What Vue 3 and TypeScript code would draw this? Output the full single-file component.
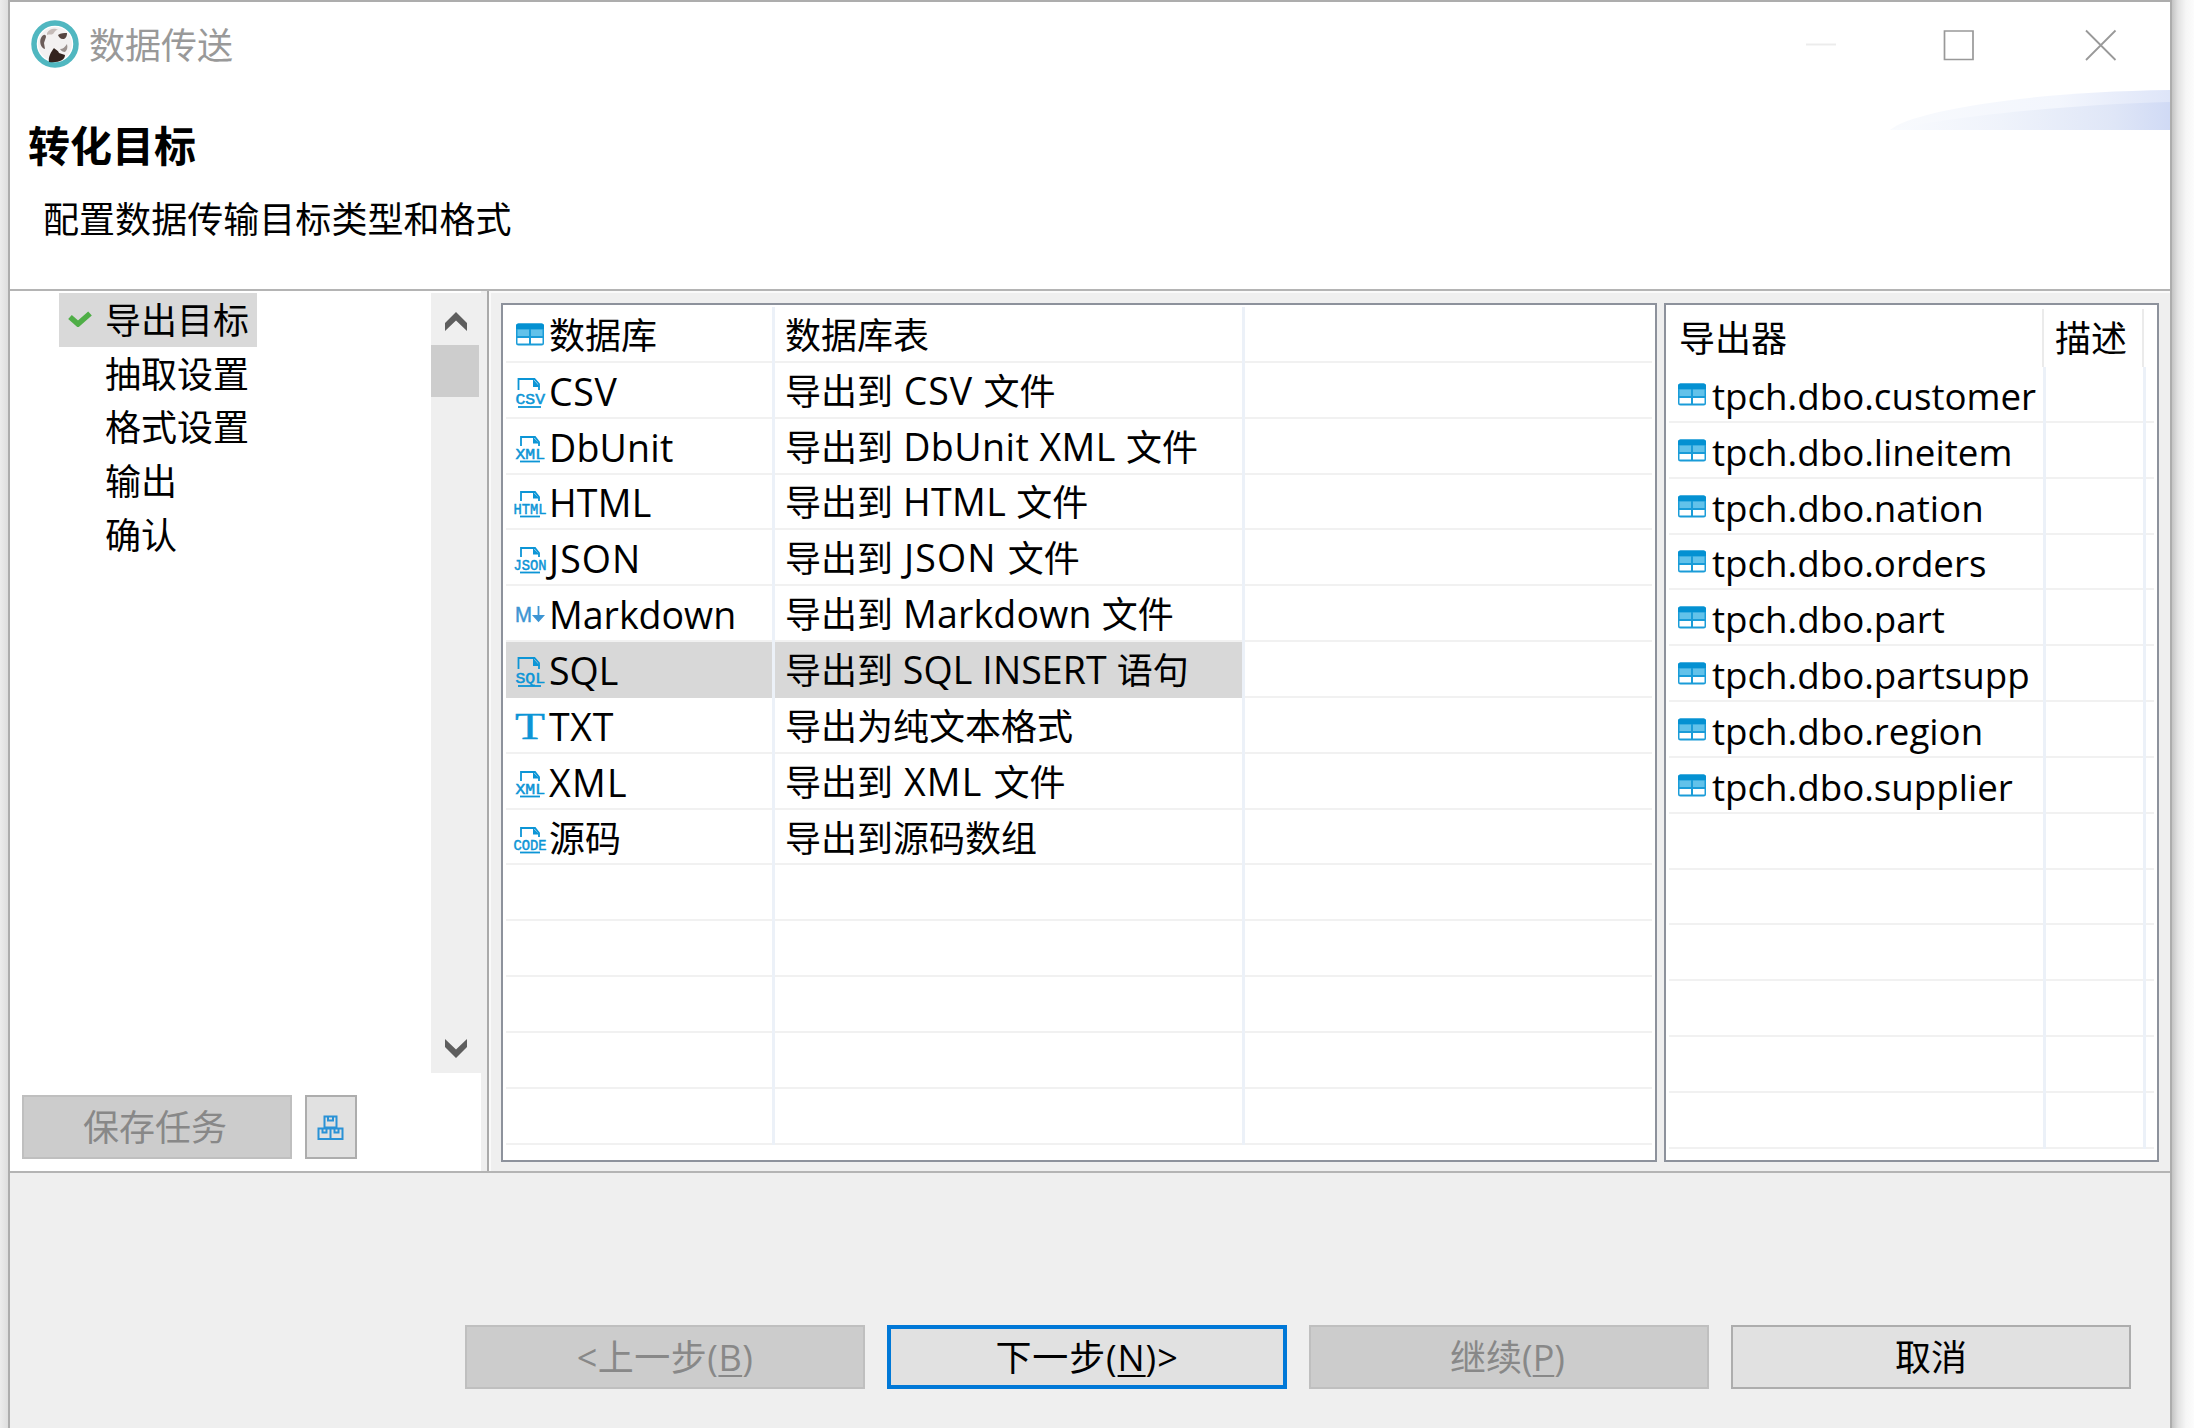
<script setup lang="ts">
interface Format {
  icon: string
  name: string
  desc: [string, string?, string?]
  cjk?: boolean
  nameGap?: number
  descGap?: number
}

const steps: string[] = ['导出目标', '抽取设置', '格式设置', '输出', '确认']

const formats: Format[] = [
  { icon: 'table', name: '数据库', desc: ['数据库表'], cjk: true },
  { icon: 'CSV', name: 'CSV', desc: ['导出到', ' CSV ', '文件'], nameGap: 0.7, descGap: 0.9 },
  { icon: 'XML', name: 'DbUnit', desc: ['导出到', ' DbUnit XML ', '文件'], nameGap: 0.2, descGap: 0.45 },
  { icon: 'HTML', name: 'HTML', desc: ['导出到', ' HTML ', '文件'], nameGap: 0.2, descGap: 0.35 },
  { icon: 'JSON', name: 'JSON', desc: ['导出到', ' JSON ', '文件'], nameGap: 1.1, descGap: 1.2 },
  { icon: 'md', name: 'Markdown', desc: ['导出到', ' Markdown ', '文件'], nameGap: 0, descGap: 0.2 },
  { icon: 'SQL', name: 'SQL', desc: ['导出到', ' SQL INSERT ', '语句'], nameGap: 0, descGap: 0.1 },
  { icon: 'txt', name: 'TXT', desc: ['导出为纯文本格式'], nameGap: 0.7 },
  { icon: 'XML', name: 'XML', desc: ['导出到', ' XML ', '文件'], nameGap: 1.3, descGap: 1.2 },
  { icon: 'CODE', name: '源码', desc: ['导出到源码数组'], cjk: true },
]

const tables: string[] = ['customer', 'lineitem', 'nation', 'orders', 'part', 'partsupp', 'region', 'supplier']
const selected = 'SQL'
const big = (name: string): boolean => name === 'CSV' || name === 'SQL'
const gap = (v?: number) => ({ letterSpacing: `${v ?? 0}px` })
</script>

<template>
  <div class="desktop">
    <div class="window">
      <header class="head">
        <div class="titlebar">
          <svg class="logo" viewBox="0 0 48 50">
            <circle cx="24" cy="25" r="21" fill="#fff" stroke="#50b7c0" stroke-width="5.500" />
            <circle cx="24" cy="25" r="17" fill="#f3f1f1" />
            <path d="M10 19c2-4 5-4 5-1l-2 6 1 6c-4-1-6-7-4-11z" fill="#6b5c59" />
            <path d="M16 14c3-5 8-5 11-3-3 0-3 2-5 4-2 1-4 0-6 1z" fill="#c5bbb8" />
            <path d="M27 16c3-2 6-2 9-2 0 4-2 6-4 6-3 0-4-2-5-4z" fill="#55443f" />
            <path d="M29 30c3 0 5-2 7-5 1 4 0 6-2 8-2 0-4-1-5-3z" fill="#9b918e" />
            <path d="M18 43c-1-5 2-10 5-14 2 2 4 2 5 5l6 2c0 5-6 8-16 7z" fill="#33231e" />
          </svg>
          <span class="caption">数据传送</span>
          <svg class="controls" viewBox="0 0 320 32">
            <path d="M1 15.500h30" stroke="#ececec" stroke-width="2" />
            <path d="M139.500 2h28.500v28.500h-28.500z" fill="none" stroke="#999" stroke-width="1.700" />
            <path d="M281 1.500l29.500 29.500M310.500 1.500L281 31" stroke="#999" stroke-width="1.800" />
          </svg>
        </div>
        <svg class="swoosh" viewBox="0 0 280 40">
          <defs>
            <linearGradient id="sw1"><stop offset="0" stop-color="#f8fafd" /><stop offset=".6" stop-color="#f3f6fd" /><stop offset="1" stop-color="#dee5f8" /></linearGradient>
            <linearGradient id="sw2"><stop offset="0" stop-color="#f9fbfe" /><stop offset=".4" stop-color="#eff3fb" /><stop offset=".8" stop-color="#dfe6f7" /><stop offset="1" stop-color="#d0daf5" /></linearGradient>
          </defs>
          <path d="M0 40C20 22 130 2 280 0v40z" fill="url(#sw1)" />
          <path d="M0 40C60 27 170 15 280 12v28z" fill="url(#sw2)" />
        </svg>
        <h1>转化目标</h1>
        <p>配置数据传输目标类型和格式</p>
      </header>

      <main class="body">
        <aside class="side">
          <div class="side-main">
            <ul class="steps">
              <li v-for="(step, i) in steps" :key="step" :class="{ on: i === 0 }">
                <svg v-if="i === 0" class="check" viewBox="0 0 24 16"><path d="M2 6l8 7L22 2.500" fill="none" stroke="#4fae47" stroke-width="5.500" /></svg>
                <span>{{ step }}</span>
              </li>
            </ul>
            <div class="scroll">
              <svg class="arrow" viewBox="0 0 24 20"><path d="M1 11L12 0l11 11v8L12 8.500 1 19z" fill="#5e5e5e" /></svg>
              <div class="thumb"></div>
              <svg class="arrow down" viewBox="0 0 24 20"><path d="M1 9l11 11L23 9V1L12 11.500 1 1z" fill="#5e5e5e" /></svg>
            </div>
          </div>
          <div class="task">
            <button class="btn off save">保存任务</button>
            <button class="btn small">
              <svg viewBox="0 0 27 26" width="27" height="26"><path d="M7.500 1.500h12v11h-12zM11 1.500v4h5v-4M1.500 13.500h24v10.500h-24zM13.500 13.500v10.500M5.500 13.500v4h4v-4M17.500 13.500v4h4v-4" fill="none" stroke="#2a92d6" stroke-width="2" /></svg>
            </button>
          </div>
        </aside>

        <section class="panes">
          <div class="grid formats">
            <div v-for="f in formats" :key="f.name" class="row" :class="{ sel: f.name === selected }">
              <div class="cell c1">
                <svg class="ico" viewBox="0 0 34 34">
                  <g v-if="f.icon === 'table'">
                    <path d="M5.500 4.500h23Q31 4.500 31 7v17q0 2.500-2.500 2.500h-23Q3 26.500 3 24V7q0-2.500 2.500-2.500z" fill="#1a9cd8" />
                    <path d="M5.500 4.500h23Q31 4.500 31 7v3H3V7q0-2.500 2.500-2.500z" fill="#0491d2" />
                    <path d="M4.500 10.500h11.500v6.500H4.500zM18 10.500h11.500v6.500H18z" fill="#62c2ea" />
                    <path d="M4.500 19h11.500v5.500H4.500zM18 19h11.500v5.500H18z" fill="#fff" />
                  </g>
                  <g v-else-if="f.icon === 'md'">
                    <text x="2" y="23.500" class="mk" textLength="17" lengthAdjust="spacingAndGlyphs">M</text>
                    <path d="M25.500 8v14M21 18l4.500 5 4.500-5z" fill="#3d95d3" stroke="#3d95d3" stroke-width="1.800" />
                  </g>
                  <text v-else-if="f.icon === 'txt'" x="2" y="28.500" class="tt" textLength="30" lengthAdjust="spacingAndGlyphs">T</text>
                  <g v-else>
                    <path :d="big(f.icon) ? 'M5.500 15V4h16l4.500 5v6' : 'M8 15V6h14l4 5v4'" fill="none" stroke="#0c95d6" stroke-width="1.800" />
                    <path :d="big(f.icon) ? 'M20 4l7 8h-7z' : 'M20 6l6.500 6.500h-6.500z'" fill="#0c95d6" />
                    <text :x="f.icon.length > 3 ? 0.5 : 2.500" :y="big(f.icon) ? 28.5 : 27.5" class="tag" :textLength="f.icon.length > 3 ? 33 : 29.5" lengthAdjust="spacingAndGlyphs">{{ f.icon }}</text>
                    <path :d="big(f.icon) ? 'M5 32h23' : 'M7 30.500h20'" stroke="#0c95d6" stroke-width="1.800" />
                  </g>
                </svg>
                <span :class="{ latin: !f.cjk }" :style="gap(f.nameGap)">{{ f.name }}</span>
              </div>
              <div class="cell c2"><span>{{ f.desc[0] }}<span v-if="f.desc[1]" class="latin" :style="gap(f.descGap)">{{ f.desc[1] }}</span>{{ f.desc[2] ?? '' }}</span></div>
              <div class="cell c3"></div>
            </div>
            <div v-for="n in 5" :key="n" class="row">
              <div class="cell c1"></div><div class="cell c2"></div><div class="cell c3"></div>
            </div>
          </div>

          <div class="grid exporters">
            <div class="thead"><div class="h1">导出器</div><div class="h2">描述</div></div>
            <div v-for="t in tables" :key="t" class="row">
              <div class="cell e1">
                <svg class="ico" viewBox="0 0 34 34">
                  <path d="M5.500 4.500h23Q31 4.500 31 7v17q0 2.500-2.500 2.500h-23Q3 26.500 3 24V7q0-2.500 2.500-2.500z" fill="#1a9cd8" />
                  <path d="M5.500 4.500h23Q31 4.500 31 7v3H3V7q0-2.500 2.500-2.500z" fill="#0491d2" />
                  <path d="M4.500 10.500h11.500v6.500H4.500zM18 10.500h11.500v6.500H18z" fill="#62c2ea" />
                  <path d="M4.500 19h11.500v5.500H4.500zM18 19h11.500v5.500H18z" fill="#fff" />
                </svg>
                <span class="tname">tpch.dbo.{{ t }}</span>
              </div>
              <div class="cell e2"></div><div class="cell e3"></div>
            </div>
            <div v-for="n in 6" :key="n" class="row">
              <div class="cell e1"></div><div class="cell e2"></div><div class="cell e3"></div>
            </div>
          </div>
        </section>
      </main>

      <footer class="foot">
        <button class="btn off back">&lt;上一步(<u>B</u>)</button>
        <button class="btn primary">下一步(<u>N</u>)&gt;</button>
        <button class="btn off next">继续(<u>P</u>)</button>
        <button class="btn">取消</button>
      </footer>
    </div>
  </div>
</template>

<style>
body { margin: 0; overflow: hidden; background: #fff; }
</style>

<style scoped>
* { box-sizing: border-box; }
.desktop {
  width: 2194px; height: 1428px; overflow: hidden; padding-left: 8px;
  background: linear-gradient(90deg, #ececec, #dedede 8px, #dedede 2171px, #c4c4c4 2172px, #e2e2e2 2178px, #f6f6f6 2186px, #fcfcfc 2194px);
  font-family: "Open Sans", "Noto Sans CJK SC", sans-serif; font-size: 36px; line-height: 50px; color: #000;
}
.window {
  width: 2164px; height: 1440px; display: flex; flex-direction: column;
  border: 2px solid #adadad; background: #efefef;
}
.head { position: relative; height: 289px; background: #fff; border-bottom: 2px solid #b4b4b4; flex: none; }
.titlebar { display: flex; height: 86px; padding-left: 21px; align-items: center; }
.logo { width: 48px; height: 50px; margin-top: -2px; flex: none; }
.caption { margin: 2px 0 0 10px; color: #999; flex: 1; }
.controls { width: 320px; height: 32px; margin-right: 45px; }
.swoosh { position: absolute; right: 0; top: 88px; width: 280px; height: 40px; }
h1 { margin: 30px 0 0 18px; font-size: 42px; line-height: 56px; font-weight: 700; }
p { margin: 21px 0 0 33px; letter-spacing: 0.050px; }
.body { display: flex; height: 882px; flex: none; border-bottom: 2px solid #b4b4b4; }
.side { width: 479px; background: #fff; border-right: 2px solid #aaa; padding-top: 2px; flex: none; box-shadow: inset -6px 0 0 #efefef; }
.side-main { display: flex; height: 780px; justify-content: space-between; }
.steps { list-style: none; margin: 0; padding: 0 0 0 49px; }
.steps li { height: 53.700px; display: flex; align-items: center; width: 198px; padding: 2px 0 0 46px; }
.steps li.on { background: #d9d9d9; padding-left: 9px; }
.check { width: 24px; height: 16px; margin: -3px 13px 0 0; }
.scroll { width: 56px; background: #efefef; display: flex; flex-direction: column; }
.arrow { width: 24px; height: 20px; margin: 19px 0 13px 13px; }
.arrow.down { margin: auto 0 15px 13px; }
.thumb { width: 48px; height: 52px; background: #cdcdcd; }
.task { display: flex; gap: 13px; padding: 22px 0 0 12px; }
.btn {
  height: 64px; width: 400px; padding: 2px 0 0; border: 2px solid #adadad; background: #e1e1e1;
  font: inherit; color: #000; display: flex; align-items: center; justify-content: center; white-space: pre; flex: none;
}
.btn.off { background: #ccc; border-color: #bfbfbf; color: #888; }
.btn.back { letter-spacing: 0.500px; }
.btn.next { padding-right: 3px; }
.btn.save { width: 270px; padding-right: 4px; }
.btn.small { width: 52px; padding-right: 2px; }
.btn.primary { border: 4px solid #0078d7; letter-spacing: 0.900px; }
.btn u { text-decoration-thickness: 2px; text-underline-offset: 4px; }
.panes { flex: 1; display: flex; gap: 7px; padding: 12px 11px 9px 12px; box-shadow: inset 2px 2px 0 #fafafa; }
.grid { border: 2px solid #8d929c; background: #fff; overflow: hidden; display: flex; flex-direction: column; padding: 2px 3px; }
.formats { width: 1156px; }
.exporters { flex: 1; }
.row { display: flex; height: 55.850px; flex: none; border-bottom: 2px solid #f1f1f1; }
.cell { display: flex; align-items: center; white-space: pre; border-right: 3px solid #ecf1f8; margin-bottom: -2px; padding-top: 2px; }
.c1 { width: 269px; padding-left: 7px; }
.c2 { width: 470px; padding-left: 10px; }
.c3, .e3 { border: 0; flex: 1; }
.sel .c1, .sel .c2 { background: #d8d8d8; }
.latin { font-size: 37.500px; line-height: 48px; }
.ico { width: 34px; height: 34px; margin-right: 2px; flex: none; overflow: visible; }
.tag { font: 15px "Liberation Mono", monospace; fill: #0c95d6; stroke: #0c95d6; stroke-width: 0.500px; }
.mk { font: 22px "Liberation Sans", sans-serif; fill: #3d95d3; stroke: #3d95d3; stroke-width: 0.500px; }
.tt { font: 38px "Liberation Serif", serif; fill: #0c95d6; stroke: #0c95d6; stroke-width: 0.400px; }
.thead { display: flex; height: 60px; flex: none; line-height: 60px; padding-top: 2px; }
.thead > div { border-right: 2px solid #ebebeb; }
.h1 { width: 375px; padding-left: 10px; }
.h2 { width: 100px; padding-left: 11px; }
.e1 { width: 377px; padding-left: 6px; }
.e1 .ico { margin-right: 3px; }
.e2 { width: 100px; }
.tname { font-size: 36.700px; }
.foot { display: flex; gap: 22px; padding: 152px 0 0 455px; }
</style>
